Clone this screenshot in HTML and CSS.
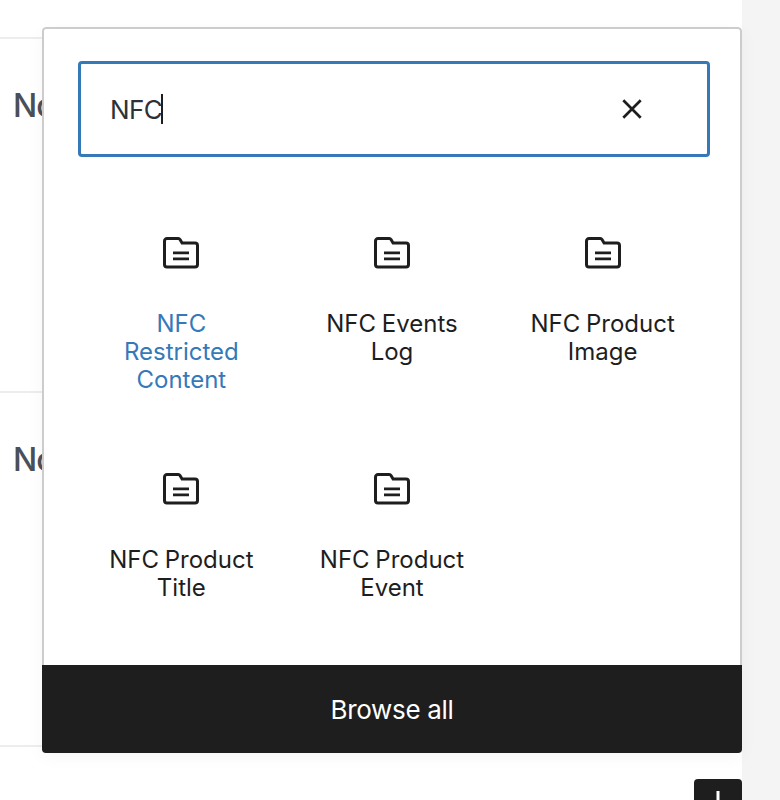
FILE: index.html
```html
<!DOCTYPE html>
<html lang="en">
<head>
<meta charset="utf-8">
<title>Block inserter</title>
<link rel="stylesheet" href="styles.css">
</head>
<body>
<svg width="0" height="0" class="defs" aria-hidden="true">
  <symbol id="folder" viewBox="0 0 36 32">
    <path d="M4 1.5H15.3Q16.4 1.5 17 2.5L19.1 6H32a2.5 2.5 0 0 1 2.5 2.5V27.6a2.5 2.5 0 0 1-2.5 2.5H4a2.5 2.5 0 0 1-2.5-2.5V4a2.5 2.5 0 0 1 2.5-2.5Z" fill="none" stroke="#1e1e1e" stroke-width="3"/>
    <path d="M10 15.8H26M10 21.8H26" stroke="#1e1e1e" stroke-width="2.8"/>
  </symbol>
</svg>
<div class="editor">
  <main class="canvas">
    <section class="panel-row first"></section>
    <section class="panel-row">No</section>
    <section class="panel-row">No</section>
    <section class="panel-row last"></section>
  </main>
  <aside class="sidebar"></aside>
</div>
<button class="appender" aria-label="Add block"><svg width="24" height="24" viewBox="0 0 24 24"><path d="M12 0V24M0 12H24" stroke="#fff" stroke-width="3"/></svg></button>
<div class="popover">
  <div class="body">
    <div class="search">
      <span class="query">NFC</span><span class="caret"></span>
      <svg class="clear" width="20" height="20" viewBox="0 0 20 20"><path d="M1.3 1.3L18.7 18.7M18.7 1.3L1.3 18.7" stroke="#1e1e1e" stroke-width="2.7"/></svg>
    </div>
    <div class="blocks">
      <div class="block active"><svg class="icon"><use href="#folder"/></svg><span>NFC<br>Restricted<br>Content</span></div>
      <div class="block"><svg class="icon"><use href="#folder"/></svg><span>NFC Events<br>Log</span></div>
      <div class="block"><svg class="icon"><use href="#folder"/></svg><span>NFC Product<br>Image</span></div>
      <div class="block"><svg class="icon"><use href="#folder"/></svg><span>NFC Product<br>Title</span></div>
      <div class="block"><svg class="icon"><use href="#folder"/></svg><span>NFC Product<br>Event</span></div>
    </div>
  </div>
  <div class="browse">Browse all</div>
</div>
</body>
</html>
```
FILE: styles.css
```css
* { box-sizing: border-box; }
body {
  margin: 0;
  width: 780px;
  height: 800px;
  overflow: hidden;
  position: relative;
  background: #fff;
  font-family: Inter, "Liberation Sans", sans-serif;
  color: #1e1e1e;
}
.defs { position: absolute; }
.editor { display: flex; height: 800px; }
.canvas { flex: 1; overflow: hidden; }
.sidebar { width: 38px; background: #f4f4f4; }
.panel-row {
  height: 354px;
  padding: 47px 0 0 13px;
  border-bottom: 2px solid #ededed;
  font-size: 32px;
  line-height: 40px;
  font-weight: 500;
  letter-spacing: -1px;
  color: #4b4f58;
}
.panel-row.first { height: 39px; padding: 0; }
.panel-row.last { border: 0; }
.popover {
  position: absolute;
  left: 42px;
  top: 27px;
  width: 700px;
  height: 726px;
  border-radius: 4px;
  overflow: hidden;
  display: flex;
  flex-direction: column;
  background: #fff;
  box-shadow: 0 4px 18px rgba(0, 0, 0, 0.04);
}
.body {
  flex: 1;
  min-height: 0;
  border: 2px solid #ccc;
  border-bottom: 0;
  border-radius: 4px 4px 0 0;
  padding: 32px 30px 0 34px;
}
.search {
  height: 96px;
  border: 3px solid #3579b8;
  border-radius: 4px;
  display: flex;
  align-items: center;
  padding: 0 65px 0 29px;
}
.query { font-size: 26px; line-height: 32px; padding-top: 2px; color: #2c3338; letter-spacing: -0.6px; }
.caret { width: 2px; height: 30px; background: #1e1e1e; margin-left: -1px; }
.clear { margin-left: auto; }
.blocks {
  display: grid;
  grid-template-columns: repeat(3, 210.67px);
  grid-auto-rows: 236px;
  margin: 80px 0 0 -2px;
}
.block {
  display: flex;
  flex-direction: column;
  align-items: center;
  text-align: center;
  font-size: 24px;
  line-height: 28px;
  word-spacing: -1px;
}
.icon { width: 36px; height: 32px; margin-bottom: 41px; }
.active { color: #3579b8; }
.browse {
  flex: none;
  height: 88px;
  background: #1e1e1e;
  color: #fff;
  display: flex;
  align-items: center;
  justify-content: center;
  font-size: 26px;
  letter-spacing: -0.3px;
}
.appender {
  position: absolute;
  left: 694px;
  top: 779px;
  width: 48px;
  height: 48px;
  padding: 12px;
  border: 0;
  border-radius: 4px;
  background: #1e1e1e;
}
.appender svg { display: block; }
```
